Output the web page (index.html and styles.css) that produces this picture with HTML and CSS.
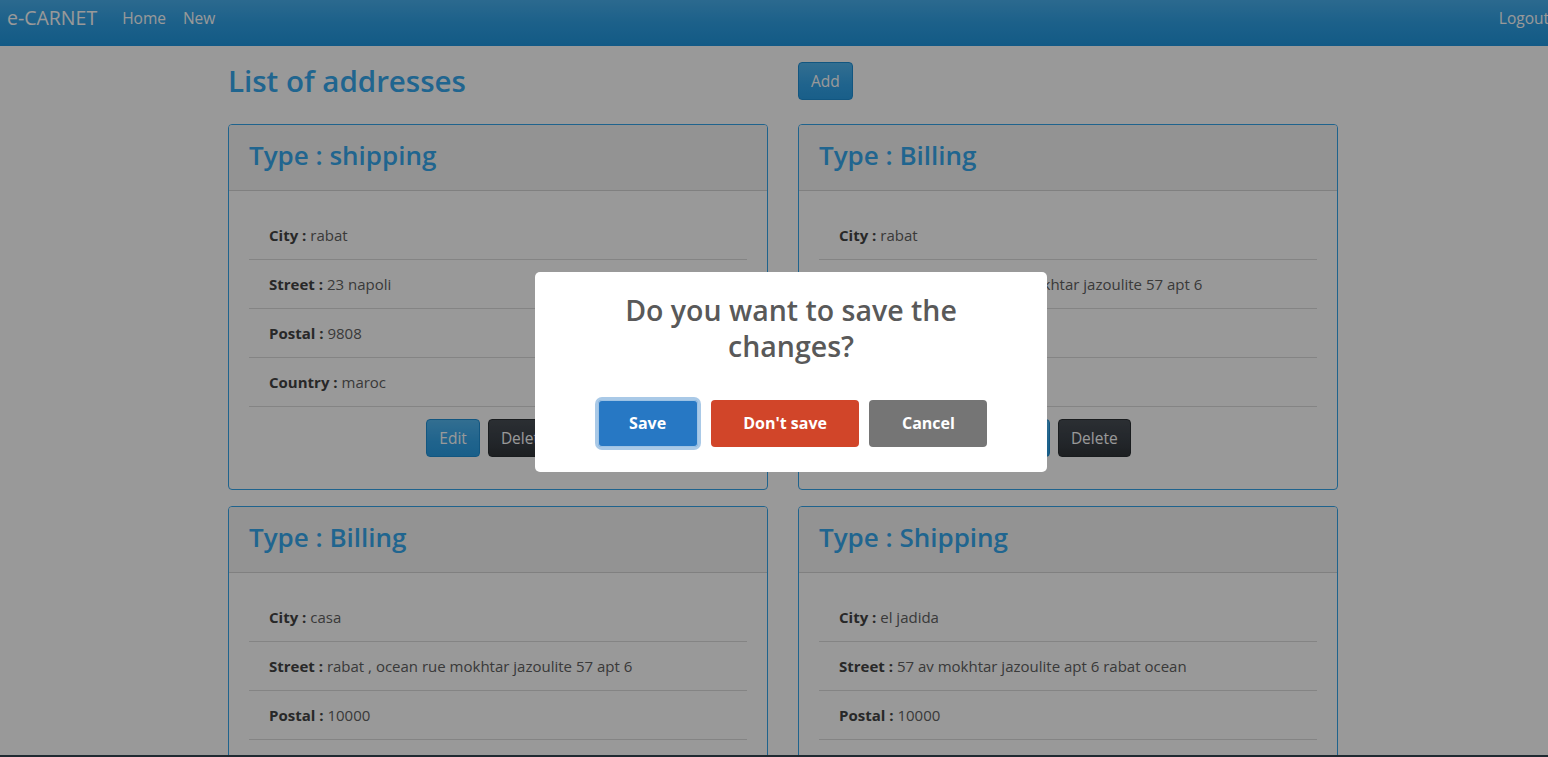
FILE: index.html
```html
<!DOCTYPE html>
<html lang="en">
<head>
<meta charset="utf-8">
<title>e-CARNET</title>
<link rel="stylesheet" href="styles.css">
</head>
<body>
<div class="page">
  <nav class="navbar">
    <div class="nav-left">
      <a class="brand" href="#">e-CARNET</a>
      <a class="nav-link" href="#">Home</a>
      <a class="nav-link" href="#">New</a>
    </div>
    <a class="nav-link logout" href="#">Logout</a>
  </nav>

  <main class="container">
    <div class="grid head-row">
      <h2 class="page-title">List of addresses</h2>
      <div><button class="btn btn-primary">Add</button></div>
    </div>

    <div class="grid cards">
      <section class="card">
        <header class="card-header"><h3 class="card-title">Type : shipping</h3></header>
        <div class="card-body">
          <ul class="list">
            <li><b>City :</b> rabat</li>
            <li><b>Street :</b> 23 napoli</li>
            <li><b>Postal :</b> 9808</li>
            <li><b>Country :</b> maroc</li>
          </ul>
          <div class="actions"><button class="btn btn-primary">Edit</button><button class="btn btn-dark">Delete</button></div>
        </div>
      </section>

      <section class="card">
        <header class="card-header"><h3 class="card-title">Type : Billing</h3></header>
        <div class="card-body">
          <ul class="list">
            <li><b>City :</b> rabat</li>
            <li><b>Street :</b> rabat , ocean rue mokhtar jazoulite 57 apt 6</li>
            <li><b>Postal :</b> 10000</li>
            <li><b>Country :</b> maroc</li>
          </ul>
          <div class="actions"><button class="btn btn-primary">Edit</button><button class="btn btn-dark">Delete</button></div>
        </div>
      </section>

      <section class="card">
        <header class="card-header"><h3 class="card-title">Type : Billing</h3></header>
        <div class="card-body">
          <ul class="list">
            <li><b>City :</b> casa</li>
            <li><b>Street :</b> rabat , ocean rue mokhtar jazoulite 57 apt 6</li>
            <li><b>Postal :</b> 10000</li>
            <li><b>Country :</b> maroc</li>
          </ul>
          <div class="actions"><button class="btn btn-primary">Edit</button><button class="btn btn-dark">Delete</button></div>
        </div>
      </section>

      <section class="card">
        <header class="card-header"><h3 class="card-title">Type : Shipping</h3></header>
        <div class="card-body">
          <ul class="list">
            <li><b>City :</b> el jadida</li>
            <li><b>Street :</b> 57 av mokhtar jazoulite apt 6 rabat ocean</li>
            <li><b>Postal :</b> 10000</li>
            <li><b>Country :</b> maroc</li>
          </ul>
          <div class="actions"><button class="btn btn-primary">Edit</button><button class="btn btn-dark">Delete</button></div>
        </div>
      </section>
    </div>
  </main>
</div>

<div class="overlay">
  <div class="popup" role="dialog">
    <h2 class="popup-title">Do you want to save the changes?</h2>
    <div class="popup-actions">
      <button class="sbtn sbtn-confirm">Save</button>
      <button class="sbtn sbtn-deny">Don't save</button>
      <button class="sbtn sbtn-cancel">Cancel</button>
    </div>
  </div>
</div>
<div class="taskbar"></div>
</body>
</html>
```

FILE: styles.css
```css
html, body {
  margin: 0;
  padding: 0;
  overflow: hidden;
  height: 100%;
}
body {
  font-family: "Open Sans", "Noto Sans", sans-serif;
  background: #ffffff;
  color: #555;
}
.page {
  width: 1566px;
}

/* navbar */
.navbar {
  height: 46px;
  box-sizing: border-box;
  padding: 0 17px 0 7px;
  display: flex;
  justify-content: space-between;
  align-items: flex-start;
  background: linear-gradient(#49b0ee, #2fa1e6 50%, #2097df);
}
.nav-left {
  display: flex;
  align-items: flex-start;
}
.navbar a {
  color: #ffffff;
  text-decoration: none;
}
.brand {
  font-size: 19.5px;
  line-height: 36px;
  margin-right: 25px;
}
.nav-link {
  font-size: 15.5px;
  line-height: 36px;
  margin-right: 17px;
}
.logout {
  margin-right: 0;
}

/* main */
.container {
  width: 1110px;
  margin: 0 auto;
  padding-top: 16px;
}
.grid {
  display: grid;
  grid-template-columns: 540px 540px;
  column-gap: 30px;
}
.head-row {
  align-items: center;
  margin-bottom: 24px;
}
.page-title {
  margin: 0;
  font-size: 29.5px;
  line-height: 38px;
  font-weight: 600;
  color: #36a9ee;
}
.btn {
  font-family: inherit;
  font-size: 15.5px;
  height: 38px;
  padding: 0 12px;
  border-radius: 4px;
  color: #ffffff;
  cursor: pointer;
}
.btn-primary {
  border: 1px solid #1e8fd6;
  background: linear-gradient(#54b8f2, #35a6eb 60%, #2a9ee5);
}
.btn-dark {
  border: 1px solid #2b2f33;
  background: linear-gradient(#484e55, #3a4047 60%, #313539);
}

.cards {
  row-gap: 16px;
}
.card {
  border: 1px solid #35a6ec;
  border-radius: 4px;
  background: #ffffff;
  overflow: hidden;
}
.card-header {
  height: 66px;
  box-sizing: border-box;
  padding: 0 20px 5px;
  display: flex;
  align-items: center;
  background: #f5f5f5;
  border-bottom: 1px solid #d6d6d6;
}
.card-title {
  margin: 0;
  font-size: 26px;
  font-weight: 600;
  color: #36a9ee;
}
.card-body {
  padding: 20px;
}
.list {
  list-style: none;
  margin: 0;
  padding: 0;
}
.list li {
  height: 48px;
  padding: 0 20px;
  display: flex;
  align-items: center;
  border-bottom: 1px solid #dcdcdc;
  font-size: 15px;
  color: #616161;
  white-space: pre;
}
.list b {
  color: #444;
  font-weight: 700;
}
.actions {
  display: flex;
  justify-content: center;
  gap: 8px;
  margin: 12px 0;
  padding-right: 9px;
}

/* overlay / dialog */
.overlay {
  position: fixed;
  inset: 0;
  background: rgba(0, 0, 0, 0.4);
  display: flex;
  justify-content: center;
  align-items: center;
  padding: 0 0 14px 34px;
}
.popup {
  width: 512px;
  box-sizing: border-box;
  background: #ffffff;
  border-radius: 5px;
  padding: 0 0 20px;
  text-align: center;
}
.popup-title {
  margin: 0;
  padding: 20px 60px 0;
  font-size: 28.5px;
  line-height: 36px;
  font-weight: 600;
  color: #595959;
}
.popup-actions {
  display: flex;
  justify-content: center;
  margin-top: 31px;
  padding-left: 3px;
}
.sbtn {
  margin: 5px;
  height: 47px;
  padding: 0 32.5px;
  border: 0;
  border-radius: 4px;
  font-family: inherit;
  font-size: 16px;
  font-weight: 700;
  color: #ffffff;
  cursor: pointer;
}
.sbtn-confirm {
  background: #2778c4;
  padding: 0 31.5px;
  margin-right: 8px;
  box-shadow: inset 0 0 0 1px rgba(255, 255, 255, 0.55), 0 0 0 3px rgba(39, 120, 196, 0.4);
}
.sbtn-deny {
  background: #d14529;
}
.sbtn-cancel {
  background: #757575;
}

.taskbar {
  position: fixed;
  left: 0;
  right: 0;
  bottom: 0;
  height: 2px;
  background: #1f2a31;
}
```
